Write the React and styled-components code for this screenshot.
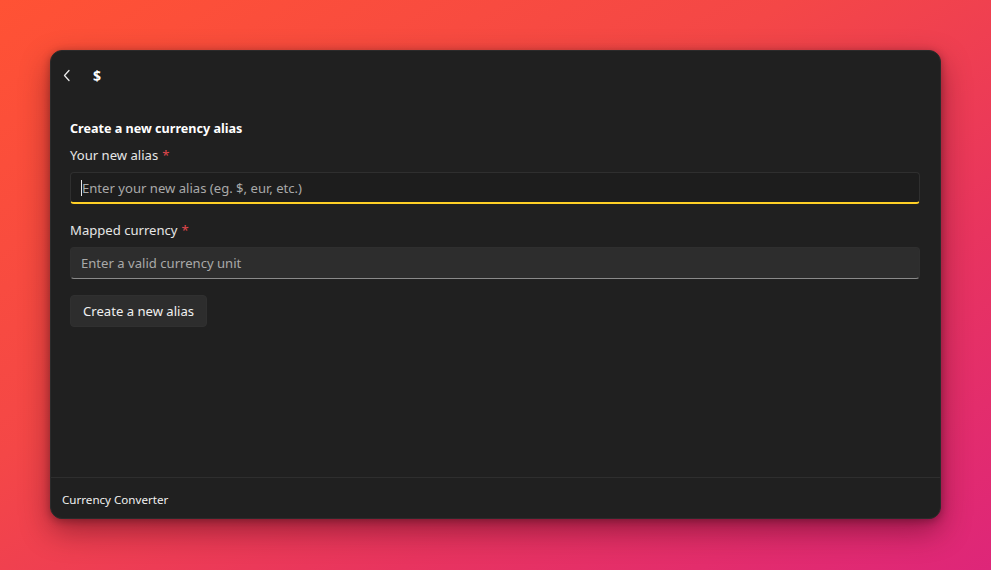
import React from "react";
import styled, { createGlobalStyle } from "styled-components";

const Global = createGlobalStyle`
  html, body { margin: 0; padding: 0; }
  body {
    width: 991px;
    height: 570px;
    overflow: hidden;
    font-family: "Noto Sans", "Open Sans", sans-serif;
    background: linear-gradient(150deg, #ff5234 0%, #f44747 40%, #e8345f 70%, #de2679 100%);
  }
  * { box-sizing: border-box; }
`;

const Stage = styled.div`
  width: 991px;
  height: 570px;
  padding: 50px 50px 51px 50px;
  display: flex;
`;

const Window = styled.div`
  flex: 1;
  display: flex;
  flex-direction: column;
  background: #202020;
  border-radius: 12px;
  border: 1px solid #2b2b2b;
  box-shadow: 0 12px 30px rgba(60, 0, 20, 0.45), 0 2px 8px rgba(0, 0, 0, 0.3);
  overflow: hidden;
  color: #f3f3f3;
`;

const TopBar = styled.div`
  height: 48px;
  display: flex;
  align-items: center;
  padding: 0 0 0 11px;
  gap: 21px;
`;

const BackButton = styled.button`
  width: 10px;
  height: 20px;
  padding: 0;
  border: none;
  background: none;
  color: #e8e8e8;
  display: flex;
  align-items: center;
  justify-content: center;
`;

const Glyph = styled.span`
  font-size: 14px;
  font-weight: 700;
  color: #ffffff;
`;

const Body = styled.div`
  flex: 1;
  padding: 21px 20px 0 19px;
  display: flex;
  flex-direction: column;
`;

const Heading = styled.div`
  font-size: 12.6px;
  font-weight: 700;
  line-height: 18px;
  color: #ffffff;
  margin-bottom: 8px;
`;

const Label = styled.div`
  font-size: 13.1px;
  line-height: 18px;
  color: #e6e6e6;
  margin-bottom: 8px;
`;

const Required = styled.span`
  color: #e0474c;
  margin-left: 4px;
`;

const Field = styled.div`
  height: 32px;
  border-radius: 4px;
  display: flex;
  align-items: center;
  padding: 0 10px;
  font-size: 13.1px;
  color: #a9a9a9;
  margin-bottom: ${p => p.$gap}px;
  background: ${p => (p.$focused ? "#1d1d1d" : "#2d2d2d")};
  border: 1px solid #2f2f2f;
  border-bottom: ${p => (p.$focused ? "2px solid #ffd026" : "1px solid #8a8a8a")};
`;

const Caret = styled.span`
  display: inline-block;
  width: 1px;
  height: 16px;
  background: #e8e8e8;
`;

const Button = styled.button`
  align-self: flex-start;
  height: 32px;
  padding: 0 12px;
  border-radius: 4px;
  border: 1px solid #303030;
  background: #2d2d2d;
  color: #f0f0f0;
  font-family: inherit;
  font-size: 13.1px;
`;

const Footer = styled.div`
  height: 41px;
  border-top: 1px solid #2e2e2e;
  display: flex;
  align-items: center;
  padding: 2px 11px 0;
  font-size: 11.6px;
  color: #f0f0f0;
`;

export default function App() {
  return (
    <>
      <Global />
      <Stage>
        <Window>
          <TopBar>
            <BackButton aria-label="Back">
              <svg width="8" height="13" viewBox="0 0 8 13" fill="none">
                <path d="M6 1.5 L1.5 6.5 L6 11.5" stroke="currentColor" strokeWidth="1.3" strokeLinecap="round" strokeLinejoin="round" />
              </svg>
            </BackButton>
            <Glyph>$</Glyph>
          </TopBar>
          <Body>
            <Heading>Create a new currency alias</Heading>
            <Label>Your new alias<Required>*</Required></Label>
            <Field $focused $gap={17}>
              <Caret />Enter your new alias (eg. $, eur, etc.)
            </Field>
            <Label>Mapped currency<Required>*</Required></Label>
            <Field $gap={16}>Enter a valid currency unit</Field>
            <Button>Create a new alias</Button>
          </Body>
          <Footer>Currency Converter</Footer>
        </Window>
      </Stage>
    </>
  );
}
